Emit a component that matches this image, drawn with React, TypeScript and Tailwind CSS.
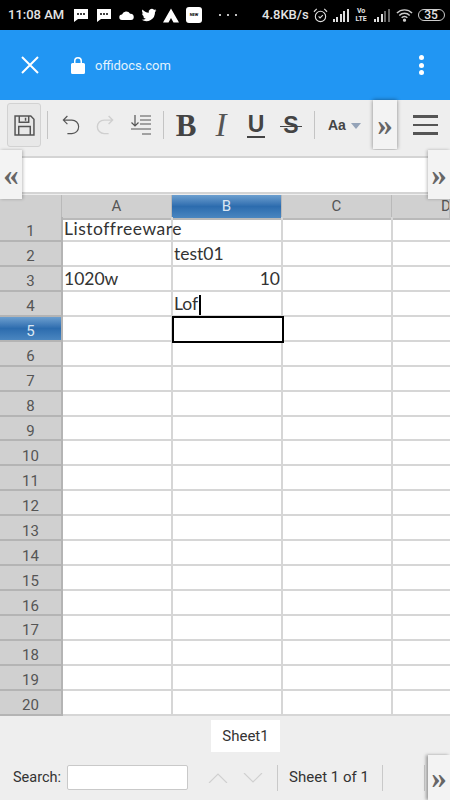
const ROWS = Array.from({ length: 20 }, (_, i) => i + 1)

// cell contents by row number: [column A, column B]
const CELLS: Record<number, { a?: string; b?: string; bRight?: boolean; caret?: boolean }> = {
  1: { a: 'Listoffreeware' },
  2: { b: 'test01' },
  3: { a: '1020w', b: '10', bRight: true },
  4: { b: 'Lof', caret: true },
}

function Chat({ className }: { className?: string }) {
  return (
    <svg viewBox="0 0 16 14" className={className} fill="white">
      <path d="M1 1h14v10H5l-4 3z" />
      <circle cx="5" cy="6" r="1" fill="black" />
      <circle cx="8" cy="6" r="1" fill="black" />
      <circle cx="11" cy="6" r="1" fill="black" />
    </svg>
  )
}

function Bars({ dim }: { dim?: boolean }) {
  const hs = [3, 5, 8, 11, 13]
  return (
    <div className="flex h-[13px] items-end gap-[1.5px]">
      {hs.map((h, i) => (
        <div
          key={i}
          className={i > 2 && dim ? 'w-[2px] bg-[#666]' : 'w-[2px] bg-[#ddd]'}
          style={{ height: h }}
        />
      ))}
    </div>
  )
}

function StatusBar() {
  return (
    <div className="flex h-[30px] items-center bg-black pl-[8px] text-[#e4e4e4]">
      <span className="w-[65px] text-[13px] font-medium whitespace-nowrap">11:08 AM</span>
      <Chat className="h-[14px] w-[16px]" />
      <Chat className="ml-[7px] h-[14px] w-[16px]" />
      <svg viewBox="0 0 16 10" className="ml-[7px] h-[9px] w-[15px]" fill="white">
        <path d="M3 10a3 3 0 0 1 0-6 5 5 0 0 1 9-1 3.500 3.500 0 0 1 1 7z" />
      </svg>
      <svg viewBox="0 0 24 24" className="ml-[7px] h-[16px] w-[16px]" fill="white">
        <path d="M23 5c-.8.4-1.700.6-2.600.7.9-.6 1.600-1.400 2-2.500-.9.5-1.900.9-2.900 1.100a4.600 4.600 0 0 0-7.900 4.200C7.800 8.300 4.400 6.500 2.200 3.700c-1.200 2.100-.6 4.800 1.400 6.200-.7 0-1.400-.2-2.100-.6 0 2.300 1.600 4.200 3.700 4.700-.7.2-1.400.2-2.100.1.600 1.900 2.300 3.200 4.300 3.200A9.300 9.300 0 0 1 1 19.200 13 13 0 0 0 21 7.600c.8-.7 1.500-1.600 2-2.600z" />
      </svg>
      <svg viewBox="0 0 16 14" className="ml-[6px] h-[15px] w-[16px]" fill="white">
        <path d="M8 0l8 14h-5.500L8 9.500 5.500 14H0z" />
      </svg>
      <div className="ml-[7px] flex h-[16px] w-[16px] items-center justify-center rounded-[3px] bg-white">
        <span className="text-[4px] leading-none font-bold text-black">NEW</span>
      </div>
      <div className="ml-[17px] flex gap-[6px]">
        <div className="h-[2px] w-[2px] rounded-full bg-white" />
        <div className="h-[2px] w-[2px] rounded-full bg-white" />
        <div className="h-[2px] w-[2px] rounded-full bg-white" />
      </div>
      <span className="ml-[25px] text-[13px] font-medium whitespace-nowrap">4.8KB/s</span>
      <svg viewBox="0 0 16 16" className="ml-[4px] h-[15px] w-[15px]" fill="none" stroke="#ddd" strokeWidth="1.200">
        <circle cx="8" cy="9" r="5.500" />
        <path d="M6 9l1.500 1.500L10.500 7.500M1 4l3-3M15 4l-3-3" />
      </svg>
      <div className="ml-[5px]">
        <Bars />
      </div>
      <div className="ml-[5px] flex w-[15px] flex-col items-center text-[7px] leading-[8px] font-bold">
        <span>Vo</span>
        <span>LTE</span>
      </div>
      <div className="ml-[5px]">
        <Bars dim />
      </div>
      <svg viewBox="0 0 18 14" className="ml-[6px] h-[14px] w-[17px]" fill="none" stroke="#ccc" strokeWidth="1.500">
        <path d="M1 5a11 11 0 0 1 16 0M3.500 7.500a7.500 7.500 0 0 1 11 0M6 10a4 4 0 0 1 6 0" />
        <circle cx="9" cy="12.500" r="1" fill="#ccc" />
      </svg>
      <div className="ml-[5px] flex h-[12px] w-[27px] items-center justify-center rounded-full border border-[#ccc] text-[12px] leading-none font-medium">
        35
      </div>
    </div>
  )
}

function BrowserBar() {
  return (
    <div className="flex h-[70px] items-center bg-[#2196f3] pl-[21px] text-white">
      <svg viewBox="0 0 18 18" className="h-[18px] w-[18px]" stroke="white" strokeWidth="2" fill="none">
        <path d="M1 1l16 16M17 1L1 17" />
      </svg>
      <svg viewBox="0 0 14 18" className="ml-[32px] h-[18px] w-[14px]" fill="white">
        <path d="M3 7V5a4 4 0 0 1 8 0v2h1.500A1.500 1.500 0 0 1 14 8.500v8a1.500 1.500 0 0 1-1.500 1.500h-11A1.500 1.500 0 0 1 0 16.500v-8A1.500 1.500 0 0 1 1.500 7zm1.500 0h5V5a2.500 2.500 0 0 0-5 0z" />
      </svg>
      <span className="mt-[2px] ml-[10px] text-[13px] text-[#e3f2fd]">offidocs.com</span>
      <div className="mr-[26px] ml-auto flex flex-col gap-[2.500px]">
        <div className="h-[5px] w-[5px] rounded-full bg-white" />
        <div className="h-[5px] w-[5px] rounded-full bg-white" />
        <div className="h-[5px] w-[5px] rounded-full bg-white" />
      </div>
    </div>
  )
}

function Sep({ className }: { className: string }) {
  return <div className={`h-[28px] w-px shrink-0 bg-[#c4c4c4] ${className}`} />
}

function Toolbar() {
  return (
    <div className="relative flex h-[50px] items-center bg-[#eeeeee] pl-[7px] text-[#444]">
      <div className="flex h-[44px] w-[34px] items-center justify-center rounded-[3px] border border-[#d2d2d2] bg-[#e8e8e8]">
        <svg viewBox="0 0 20 20" className="h-[21px] w-[21px]" fill="none" stroke="#555" strokeWidth="1.400">
          <path d="M1 1h15l3 3v15H1zM5 1v6h9V1M11 2.500v3M4.500 19v-8h11v8" />
        </svg>
      </div>
      <Sep className="ml-[6px]" />
      <svg viewBox="0 0 20 22" className="ml-[14px] h-[24px] w-[18px]" fill="none" stroke="#555" strokeWidth="1.300">
        <path d="M6 1L1.500 5.500 6 10M1.500 5.500H11a7 7 0 0 1 0 15H6" />
      </svg>
      <svg viewBox="0 0 20 22" className="ml-[16px] h-[24px] w-[18px]" fill="none" stroke="#cfcfcf" strokeWidth="1.500">
        <path d="M14 1l4.500 4.500L14 10M18.500 5.500H9a7 7 0 0 0 0 15h5" />
      </svg>
      <svg viewBox="0 0 22 22" className="ml-[16px] h-[22px] w-[22px]" fill="none" stroke="#555" strokeWidth="1.200">
        <path d="M5 1v11M1.500 8.500L5 12l3.500-3.500M10 2h11M10 6h11M10 10h11M1 15h20M12 20h9" />
      </svg>
      <Sep className="ml-[11px]" />
      <span className="ml-[10px] w-[24px] text-center font-['Liberation_Serif',serif] text-[31px] leading-none font-bold text-[#444]">
        B
      </span>
      <span className="ml-[11px] w-[24px] text-center font-['Liberation_Serif',serif] text-[33px] leading-none text-[#555] italic">
        I
      </span>
      <span className="ml-[11px] flex w-[24px] flex-col items-center font-['Liberation_Sans',sans-serif] text-[23px] leading-[24px] font-bold text-[#444]">
        U
        <span className="h-[1.500px] w-[18px] bg-[#444]" />
      </span>
      <span className="relative ml-[11px] flex w-[24px] justify-center font-['Liberation_Sans',sans-serif] text-[23px] leading-none font-bold text-[#444]">
        S
        <span className="absolute top-[12px] left-[1px] h-[1.500px] w-[22px] bg-[#444]" />
      </span>
      <Sep className="ml-[11px]" />
      <span className="ml-[13px] font-['Liberation_Sans',sans-serif] text-[14px] font-bold text-[#444]">
        Aa
      </span>
      <div className="mt-[2px] ml-[5px] h-0 w-0 border-x-[5px] border-t-[6px] border-x-transparent border-t-[#94a3b8]" />
      <div className="mr-[12px] ml-auto flex w-[25px] flex-col gap-[6px]">
        <div className="h-[2.500px] bg-[#555]" />
        <div className="h-[2.500px] bg-[#555]" />
        <div className="h-[2.500px] bg-[#555]" />
      </div>
      <div className="absolute top-0 left-[373px] flex h-[49px] w-[24px] items-center justify-center bg-[#f3f3f3] shadow-[0_0_4px_rgba(0,0,0,0.45)]">
        <Arrows dir="right" />
      </div>
    </div>
  )
}

function Arrows({ dir }: { dir: 'left' | 'right' }) {
  return (
    <span className="font-['Liberation_Serif',serif] text-[31px] leading-none font-bold text-[#666]">
      {dir === 'left' ? '«' : '»'}
    </span>
  )
}

function FormulaBar() {
  return (
    <div className="relative z-10 h-[45px] bg-[#eeeeee]">
      <div className="mx-[22px] h-[38px] translate-y-[6px] border-y-2 border-[#d4d4d4] bg-white" />
      <div className="absolute top-0 left-0 flex h-[49px] w-[22px] items-center justify-center bg-[#f3f3f3] shadow-[1px_0_3px_rgba(0,0,0,0.25)]">
        <Arrows dir="left" />
      </div>
      <div className="absolute top-0 right-0 flex h-[49px] w-[22px] items-center justify-center bg-[#f3f3f3] shadow-[-1px_0_3px_rgba(0,0,0,0.25)]">
        <Arrows dir="right" />
      </div>
    </div>
  )
}

const HEADER = 'flex items-center justify-center border-r border-b-2 border-[#b9b9b9] bg-[#d0d0d0]'
const ACTIVE = 'bg-gradient-to-b from-[#6d9fcf] via-[#2c6cae] to-[#4a86c0] text-[#dbe7f3]'

function Grid() {
  return (
    <div className="h-[521px] overflow-hidden bg-white font-['Roboto',sans-serif] text-[15px] text-[#555]">
      <div className="grid h-[22px] grid-cols-[62px_110px_110px_110px_58px]">
        <div className={HEADER} />
        <div className={HEADER}>A</div>
        <div className={`${HEADER} ${ACTIVE}`}>B</div>
        <div className={HEADER}>C</div>
        <div className={`${HEADER} justify-start overflow-hidden pl-[49px]`}>D</div>
      </div>
      {ROWS.map((n) => {
        const c = CELLS[n] ?? {}
        const selected = n === 5
        return (
          <div
            key={n}
            className="grid h-[24.950px] grid-cols-[63px_110px_110px_110px_57px] grid-rows-[24.950px] font-['Lato',sans-serif] text-[17.500px] leading-[24px] text-[#333]"
          >
            <div
              className={`flex items-center justify-center border-r-2 border-b-2 border-[#b4b4b4] pt-[7px] font-['Roboto',sans-serif] text-[15px] leading-none ${
                selected ? ACTIVE : 'bg-[#d0d0d0] text-[#555]'
              }`}
            >
              {n}
            </div>
            <div
              className={`border-r-2 border-b-2 border-[#d6d6d6] pl-[1px] whitespace-nowrap ${n === 1 ? 'tracking-[0.5px]' : ''}`}
            >
              {c.a}
            </div>
            <div
              className={
                selected
                  ? 'relative z-10 -mx-px -my-px border-2 border-black'
                  : `border-r-2 border-b-2 border-[#d6d6d6] px-[1px] whitespace-nowrap ${c.bRight ? 'text-right' : ''}`
              }
            >
              {c.b}
              {c.caret && <span className="ml-px inline-block h-[20px] w-[2px] bg-black align-middle" />}
            </div>
            <div className="border-r-2 border-b-2 border-[#d6d6d6]" />
            <div className="border-b-2 border-[#d6d6d6]" />
          </div>
        )
      })}
    </div>
  )
}

function BottomBar() {
  return (
    <div className="relative flex h-[84px] flex-col bg-[#eeeeee] font-['Roboto',sans-serif] text-[#333]">
      <div className="mt-[4px] ml-[211px] flex h-[32px] w-[69px] items-center justify-center bg-white text-[15px]">
        Sheet1
      </div>
      <div className="mt-[13px] flex h-[25px] items-center pl-[13px] text-[14.500px]">
        <span>Search:</span>
        <div className="ml-[6px] h-[25px] w-[121px] rounded-[2px] border border-[#c9c9c9] bg-white" />
        <svg viewBox="0 0 20 10" className="ml-[20px] h-[10px] w-[20px]" fill="none" stroke="#d0d0d0" strokeWidth="1.200">
          <path d="M1 10L10 1l9 9" />
        </svg>
        <svg viewBox="0 0 20 10" className="ml-[15px] h-[10px] w-[20px]" fill="none" stroke="#d0d0d0" strokeWidth="1.200">
          <path d="M1 0l9 9 9-9" />
        </svg>
        <div className="ml-[14px] h-[26px] w-px bg-[#c9c9c9]" />
        <span className="ml-[11px] text-[15px] whitespace-nowrap">Sheet 1 of 1</span>
        <div className="ml-[13px] h-[26px] w-px bg-[#c9c9c9]" />
        <div className="ml-[41px] h-[26px] w-px bg-[#c9c9c9]" />
      </div>
      <div className="absolute right-0 bottom-0 flex h-[45px] w-[22px] items-center justify-center bg-[#f3f3f3] shadow-[-2px_0_3px_rgba(0,0,0,0.35)]">
        <Arrows dir="right" />
      </div>
    </div>
  )
}

export default function App() {
  return (
    <div className="h-[800px] w-[450px] overflow-hidden font-['Roboto',sans-serif]">
      <StatusBar />
      <BrowserBar />
      <Toolbar />
      <FormulaBar />
      <Grid />
      <BottomBar />
    </div>
  )
}
